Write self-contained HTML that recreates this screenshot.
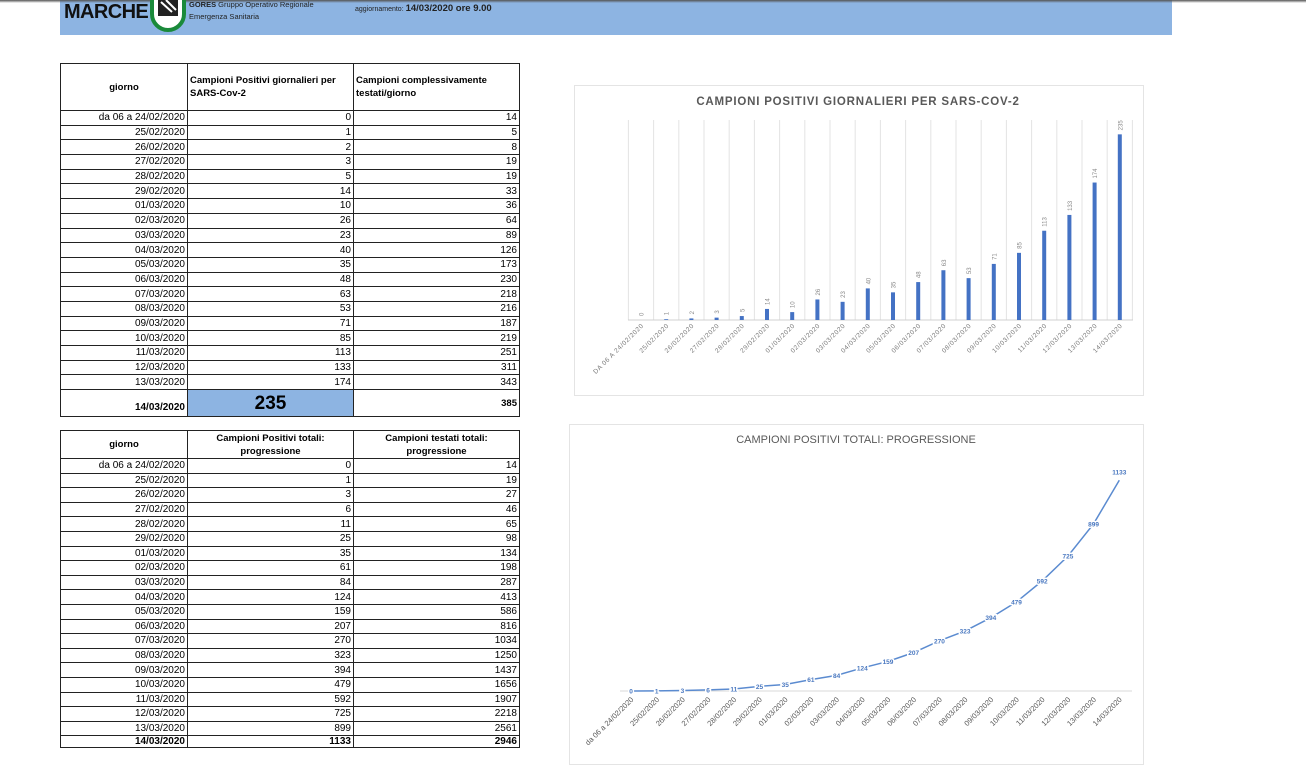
<!DOCTYPE html>
<html><head><meta charset="utf-8"><style>
*{margin:0;padding:0;box-sizing:border-box}
body{width:1306px;height:765px;background:#fff;position:relative;overflow:hidden;font-family:"Liberation Sans",sans-serif;color:#000}
.hdr{position:absolute;left:60px;top:0;width:1112px;height:35px;background:#8db4e2}
.shadow{position:absolute;left:0;top:0;width:1306px;height:3px;background:linear-gradient(#555,#fff0)}
table{position:absolute;border-collapse:collapse;font-size:10px;table-layout:fixed}
td{border:1px solid #222;padding:0 2px;text-align:right;line-height:11px;overflow:hidden;white-space:nowrap}
th{border:1px solid #222;font-weight:bold;font-size:9.5px;line-height:13px;padding:0 2px;white-space:normal}
#t1 tr.d td{height:14.7px}
#t2 tr.d td{height:14.6px}
</style></head><body>
<div class="hdr"></div>
<div class="shadow"></div>
<div style="position:absolute;left:64px;top:1px;font-weight:bold;font-size:20px;letter-spacing:-0.6px;color:#111">MARCHE</div>
<svg style="position:absolute;left:148px;top:-8px" width="40" height="40" viewBox="0 0 40 40"><path d="M4 6 V22 A16 16 0 0 0 36 22 V6" fill="#fff" stroke="#1a8a3a" stroke-width="4"/><rect x="10" y="6" width="20" height="18" fill="#222"/><path d="M13 10 L24 20 M18 8 L28 18" stroke="#fff" stroke-width="2"/></svg>
<div style="position:absolute;left:189px;top:0px;font-size:7.5px;color:#222"><b>GORES</b> Gruppo Operativo Regionale</div>
<div style="position:absolute;left:189px;top:12px;font-size:7.5px;color:#222">Emergenza Sanitaria</div>
<div style="position:absolute;left:355px;top:3px;font-size:7px;color:#222">aggiornamento: <b style="font-size:9.5px">14/03/2020 ore 9.00</b></div>

<table id="t1" style="left:60px;top:63px;width:459px">
<colgroup><col style="width:127px"><col style="width:166px"><col style="width:166px"></colgroup>
<tr><th style="height:47px;text-align:center">giorno</th><th style="text-align:left">Campioni Positivi giornalieri per SARS-Cov-2</th><th style="text-align:left">Campioni complessivamente testati/giorno</th></tr>
<tr class="d"><td>da 06 a 24/02/2020</td><td>0</td><td>14</td></tr>
<tr class="d"><td>25/02/2020</td><td>1</td><td>5</td></tr>
<tr class="d"><td>26/02/2020</td><td>2</td><td>8</td></tr>
<tr class="d"><td>27/02/2020</td><td>3</td><td>19</td></tr>
<tr class="d"><td>28/02/2020</td><td>5</td><td>19</td></tr>
<tr class="d"><td>29/02/2020</td><td>14</td><td>33</td></tr>
<tr class="d"><td>01/03/2020</td><td>10</td><td>36</td></tr>
<tr class="d"><td>02/03/2020</td><td>26</td><td>64</td></tr>
<tr class="d"><td>03/03/2020</td><td>23</td><td>89</td></tr>
<tr class="d"><td>04/03/2020</td><td>40</td><td>126</td></tr>
<tr class="d"><td>05/03/2020</td><td>35</td><td>173</td></tr>
<tr class="d"><td>06/03/2020</td><td>48</td><td>230</td></tr>
<tr class="d"><td>07/03/2020</td><td>63</td><td>218</td></tr>
<tr class="d"><td>08/03/2020</td><td>53</td><td>216</td></tr>
<tr class="d"><td>09/03/2020</td><td>71</td><td>187</td></tr>
<tr class="d"><td>10/03/2020</td><td>85</td><td>219</td></tr>
<tr class="d"><td>11/03/2020</td><td>113</td><td>251</td></tr>
<tr class="d"><td>12/03/2020</td><td>133</td><td>311</td></tr>
<tr class="d"><td>13/03/2020</td><td>174</td><td>343</td></tr>
<tr><td style="height:27px;font-weight:bold;vertical-align:bottom;padding-bottom:3px">14/03/2020</td><td style="background:#8db4e2;text-align:center;font-weight:bold;font-size:19px">235</td><td style="font-weight:bold;font-size:9.5px">385</td></tr>
</table>

<table id="t2" style="left:60px;top:430px;width:459px">
<colgroup><col style="width:127px"><col style="width:166px"><col style="width:166px"></colgroup>
<tr><th style="height:28px;text-align:center">giorno</th><th style="text-align:center">Campioni Positivi totali: progressione</th><th style="text-align:center">Campioni testati totali: progressione</th></tr>
<tr class="d"><td>da 06 a 24/02/2020</td><td>0</td><td>14</td></tr>
<tr class="d"><td>25/02/2020</td><td>1</td><td>19</td></tr>
<tr class="d"><td>26/02/2020</td><td>3</td><td>27</td></tr>
<tr class="d"><td>27/02/2020</td><td>6</td><td>46</td></tr>
<tr class="d"><td>28/02/2020</td><td>11</td><td>65</td></tr>
<tr class="d"><td>29/02/2020</td><td>25</td><td>98</td></tr>
<tr class="d"><td>01/03/2020</td><td>35</td><td>134</td></tr>
<tr class="d"><td>02/03/2020</td><td>61</td><td>198</td></tr>
<tr class="d"><td>03/03/2020</td><td>84</td><td>287</td></tr>
<tr class="d"><td>04/03/2020</td><td>124</td><td>413</td></tr>
<tr class="d"><td>05/03/2020</td><td>159</td><td>586</td></tr>
<tr class="d"><td>06/03/2020</td><td>207</td><td>816</td></tr>
<tr class="d"><td>07/03/2020</td><td>270</td><td>1034</td></tr>
<tr class="d"><td>08/03/2020</td><td>323</td><td>1250</td></tr>
<tr class="d"><td>09/03/2020</td><td>394</td><td>1437</td></tr>
<tr class="d"><td>10/03/2020</td><td>479</td><td>1656</td></tr>
<tr class="d"><td>11/03/2020</td><td>592</td><td>1907</td></tr>
<tr class="d"><td>12/03/2020</td><td>725</td><td>2218</td></tr>
<tr class="d"><td>13/03/2020</td><td>899</td><td>2561</td></tr>
<tr><td style="height:12px;font-weight:bold">14/03/2020</td><td style="font-weight:bold">1133</td><td style="font-weight:bold">2946</td></tr>
</table>

<svg id="ch" style="position:absolute;left:0;top:0" width="1306" height="765" font-family="Liberation Sans, sans-serif"></svg>
<script>
(function(){
var s=document.getElementById('ch'),h='';
h+='<rect x="574.5" y="85.5" width="569" height="310" fill="none" stroke="#e4e4e4"/>';
h+='<rect x="569.5" y="424.5" width="574" height="340" fill="none" stroke="#e4e4e4"/>';
h+='<text x="858" y="105" text-anchor="middle" font-size="11.5" font-weight="bold" fill="#595959" letter-spacing="0.8">CAMPIONI POSITIVI GIORNALIERI PER SARS-COV-2</text>';
h+='<text x="856" y="443" text-anchor="middle" font-size="11" fill="#595959">CAMPIONI POSITIVI TOTALI: PROGRESSIONE</text>';
var d=[0,1,2,3,5,14,10,26,23,40,35,48,63,53,71,85,113,133,174,235];
var t=[0,1,3,6,11,25,35,61,84,124,159,207,270,323,394,479,592,725,899,1133];
var dt=['24/02/2020','25/02/2020','26/02/2020','27/02/2020','28/02/2020','29/02/2020'];
for(var i=1;i<=14;i++)dt.push((i<10?'0':'')+i+'/03/2020');
for(i=0;i<=20;i++){var gx=628.4+25.2*i;h+='<line x1="'+gx+'" y1="120" x2="'+gx+'" y2="320" stroke="#e3e3e3"/>';}
h+='<line x1="628" y1="320" x2="1133" y2="320" stroke="#d0d0d0"/>';
for(i=0;i<20;i++){var x=641+25.2*i,bh=d[i]*0.79,ty=320-bh;
h+='<rect x="'+(x-2)+'" y="'+ty+'" width="4" height="'+bh+'" fill="#4472c4"/>';
h+='<text transform="translate('+(x+2.5)+','+(ty-4)+') rotate(-90)" font-size="6" fill="#8a8a8a">'+d[i]+'</text>';
var lb=i==0?'DA 06 A 24/02/2020':dt[i];
h+='<text transform="translate('+(x+3)+',326) rotate(-45)" text-anchor="end" font-size="6.5" fill="#7a7a7a" letter-spacing="0.6">'+lb+'</text>';}
h+='<line x1="620" y1="691" x2="1132" y2="691" stroke="#d9d9d9"/>';
var pts=[];for(i=0;i<20;i++){pts.push([631+25.7*i,691-t[i]*0.186]);}
h+='<polyline points="'+pts.map(function(p){return p[0]+','+p[1]}).join(' ')+'" fill="none" stroke="#5b8bd0" stroke-width="1.5"/>';
for(i=0;i<20;i++){var p=pts[i],ly=p[1]+2.5;if(i==19)ly=p[1]-6;
h+='<text x="'+p[0]+'" y="'+ly+'" text-anchor="middle" font-size="6.5" font-weight="bold" fill="#4a78c0" stroke="#fff" stroke-width="3" paint-order="stroke">'+t[i]+'</text>';
var lb2=i==0?'da 06 a 24/02/2020':dt[i];
h+='<text transform="translate('+(p[0]+3)+',700) rotate(-45)" text-anchor="end" font-size="7.5" fill="#595959">'+lb2+'</text>';}
s.innerHTML=h;
})();
</script>
</body></html>
